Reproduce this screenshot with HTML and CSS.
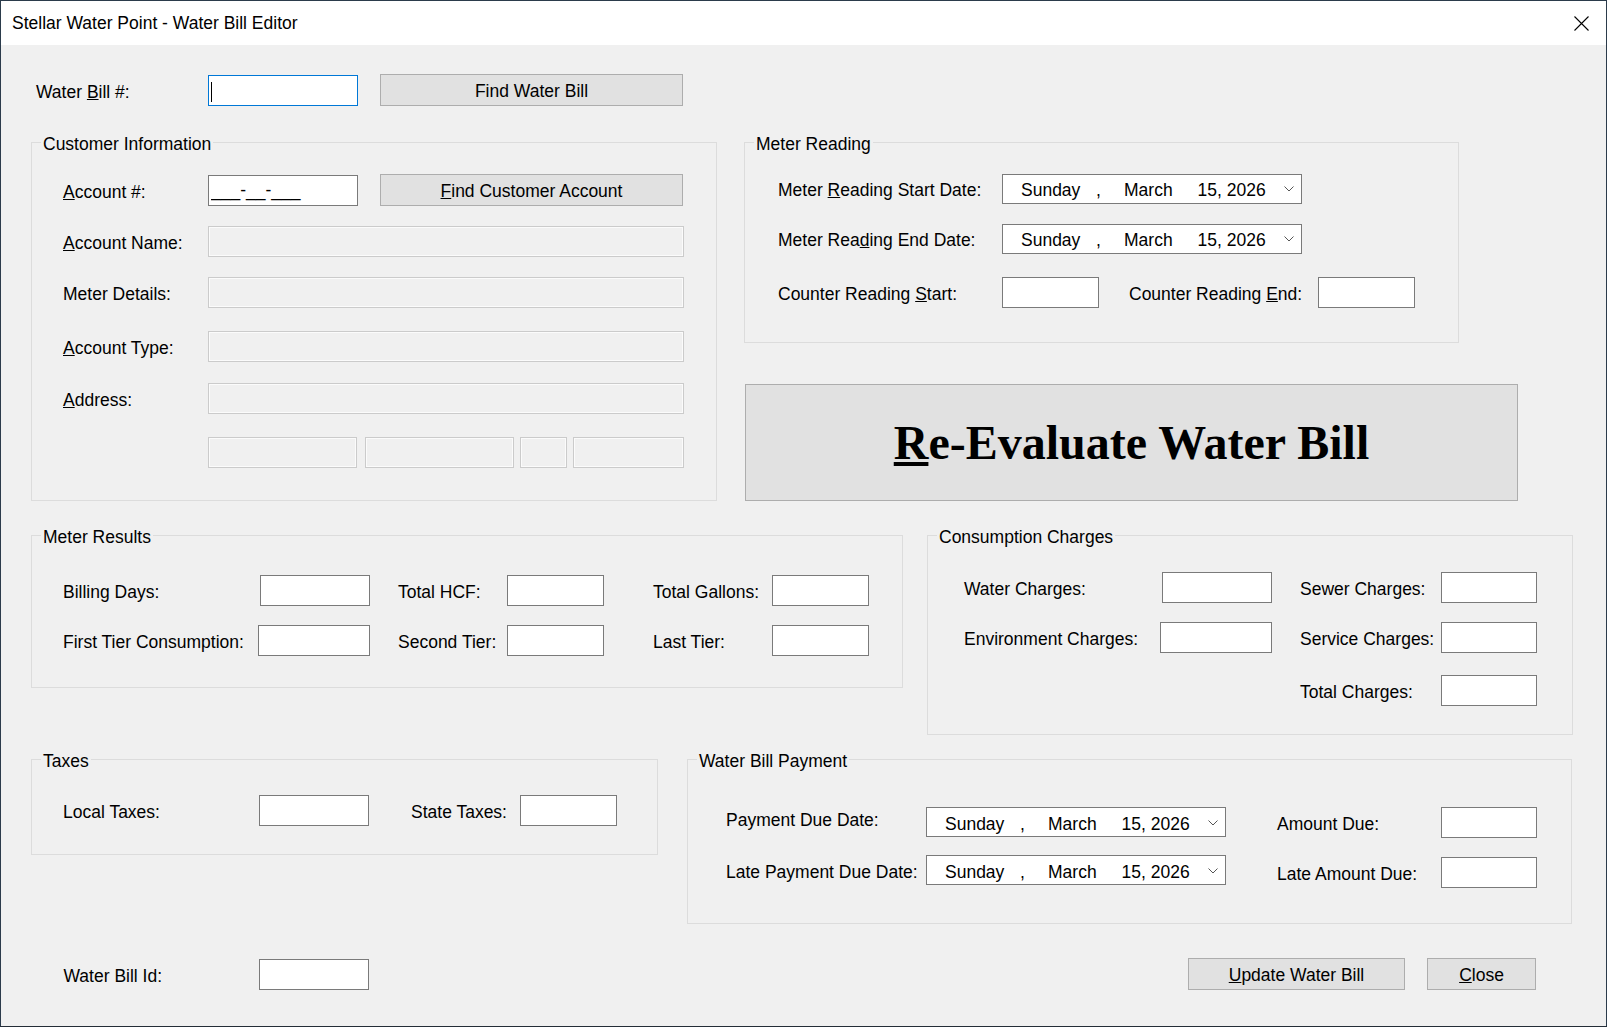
FILE: index.html
```html
<!DOCTYPE html>
<html>
<head>
    <meta charset="utf-8">
    <title>Stellar Water Point - Water Bill Editor</title>
    <link rel="stylesheet" href="styles.css">
</head>
<body>
<div class="window">
    <div class="titlebar">
        <span class="title">Stellar Water Point - Water Bill Editor</span>
        <svg class="close-x" width="15" height="15" viewBox="0 0 15 15">
            <path d="M0.5 0.5 L14.5 14.5 M14.5 0.5 L0.5 14.5" stroke="#000" stroke-width="1.1" fill="none"/>
        </svg>
    </div>

    <div class="content">
        <!-- bill lookup -->
        <div class="toprow">
            <label class="lbl w172">Water <u>B</u>ill #:</label>
            <span class="focus-wrap"><input class="tb w150 focused" type="text"><span class="caret"></span></span>
            <button class="btn w303 ml22">Find Water Bill</button>
        </div>

        <div class="band band2">
            <fieldset class="grp customer">
                <legend>Customer Information</legend>
                <div class="cust-body">
                    <div class="row">
                        <label class="lbl w145"><u>A</u>ccount #:</label>
                        <input class="tb w150 masked" type="text" value="___-__-___">
                        <button class="btn w303 ml22"><u>F</u>ind Customer Account</button>
                    </div>
                    <div class="row">
                        <label class="lbl w145"><u>A</u>ccount Name:</label>
                        <input class="tb ro w476" type="text" readonly>
                    </div>
                    <div class="row">
                        <label class="lbl w145">Meter Details:</label>
                        <input class="tb ro w476" type="text" readonly>
                    </div>
                    <div class="row">
                        <label class="lbl w145"><u>A</u>ccount Type:</label>
                        <input class="tb ro w476" type="text" readonly>
                    </div>
                    <div class="row">
                        <label class="lbl w145"><u>A</u>ddress:</label>
                        <input class="tb ro w476" type="text" readonly>
                    </div>
                    <div class="row">
                        <span class="lbl w145"></span>
                        <input class="tb ro w149" type="text" readonly>
                        <input class="tb ro w149 ml8" type="text" readonly>
                        <input class="tb ro w47 ml6" type="text" readonly>
                        <input class="tb ro w111 ml6" type="text" readonly>
                    </div>
                </div>
            </fieldset>

            <div class="right-col">
                <fieldset class="grp meter">
                    <legend>Meter Reading</legend>
                    <div class="meter-body">
                        <div class="row">
                            <label class="lbl w224">Meter <u>R</u>eading Start Date:</label>
                            <div class="datepick">
                                <span class="dp-day">Sunday</span><span class="dp-comma">,</span><span class="dp-month">March</span><span class="dp-year">15, 2026</span>
                                <svg class="chev" width="10" height="6" viewBox="0 0 10 6"><polyline points="0.5,0.5 5,5 9.5,0.5" fill="none" stroke="#555" stroke-width="1"/></svg>
                            </div>
                        </div>
                        <div class="row">
                            <label class="lbl w224">Meter Rea<u>d</u>ing End Date:</label>
                            <div class="datepick">
                                <span class="dp-day">Sunday</span><span class="dp-comma">,</span><span class="dp-month">March</span><span class="dp-year">15, 2026</span>
                                <svg class="chev" width="10" height="6" viewBox="0 0 10 6"><polyline points="0.5,0.5 5,5 9.5,0.5" fill="none" stroke="#555" stroke-width="1"/></svg>
                            </div>
                        </div>
                        <div class="row">
                            <label class="lbl w224">Counter Reading <u>S</u>tart:</label>
                            <input class="tb w97" type="text">
                            <label class="lbl w219 pl30">Counter Reading <u>E</u>nd:</label>
                            <input class="tb w97" type="text">
                        </div>
                    </div>
                </fieldset>

                <button class="btn btn-big"><u>R</u>e-Evaluate Water Bill</button>
            </div>
        </div>

        <div class="band band3">
            <fieldset class="grp results">
                <legend>Meter Results</legend>
                <div class="results-body">
                    <label class="lbl">Billing Days:</label>
                    <input class="tb" type="text">
                    <label class="lbl pl28">Total HCF:</label>
                    <input class="tb" type="text">
                    <label class="lbl pl49">Total Gallons:</label>
                    <input class="tb" type="text">

                    <label class="lbl">First Tier Consumption:</label>
                    <input class="tb nudge" type="text">
                    <label class="lbl pl28">Second Tier:</label>
                    <input class="tb" type="text">
                    <label class="lbl pl49">Last Tier:</label>
                    <input class="tb" type="text">
                </div>
            </fieldset>

            <fieldset class="grp charges">
                <legend>Consumption Charges</legend>
                <div class="charges-body">
                    <label class="lbl">Water Charges:</label>
                    <input class="tb" type="text">
                    <label class="lbl pl28">Sewer Charges:</label>
                    <input class="tb" type="text">

                    <label class="lbl">Environment Charges:</label>
                    <input class="tb nudge" type="text">
                    <label class="lbl pl28">Service Charges:</label>
                    <input class="tb" type="text">

                    <label class="lbl pl28 col3">Total Charges:</label>
                    <input class="tb" type="text">
                </div>
            </fieldset>
        </div>

        <div class="band band4">
            <fieldset class="grp taxes">
                <legend>Taxes</legend>
                <div class="taxes-body">
                    <label class="lbl">Local Taxes:</label>
                    <input class="tb" type="text">
                    <label class="lbl pl42">State Taxes:</label>
                    <input class="tb" type="text">
                </div>
            </fieldset>

            <fieldset class="grp payment">
                <legend>Water Bill Payment</legend>
                <div class="payment-body">
                    <label class="lbl up">Payment Due Date:</label>
                    <div class="datepick">
                        <span class="dp-day">Sunday</span><span class="dp-comma">,</span><span class="dp-month">March</span><span class="dp-year">15, 2026</span>
                        <svg class="chev" width="10" height="6" viewBox="0 0 10 6"><polyline points="0.5,0.5 5,5 9.5,0.5" fill="none" stroke="#555" stroke-width="1"/></svg>
                    </div>
                    <label class="lbl pl51">Amount Due:</label>
                    <input class="tb" type="text">

                    <label class="lbl">Late Payment Due Date:</label>
                    <div class="datepick">
                        <span class="dp-day">Sunday</span><span class="dp-comma">,</span><span class="dp-month">March</span><span class="dp-year">15, 2026</span>
                        <svg class="chev" width="10" height="6" viewBox="0 0 10 6"><polyline points="0.5,0.5 5,5 9.5,0.5" fill="none" stroke="#555" stroke-width="1"/></svg>
                    </div>
                    <label class="lbl pl51 low">Late Amount Due:</label>
                    <input class="tb low" type="text">
                </div>
            </fieldset>
        </div>

        <div class="foot">
            <label class="lbl w195">Water Bill Id:</label>
            <input class="tb w110" type="text">
            <button class="btn w217 push"><u>U</u>pdate Water Bill</button>
            <button class="btn w109 ml22"><u>C</u>lose</button>
        </div>
    </div>
</div>
</body>
</html>
```

FILE: styles.css
```css
* {
    box-sizing: border-box;
}

html,
body {
    margin: 0;
    padding: 0;
}

body {
    background: #242d37;
    font-family: "Liberation Sans", Arial, sans-serif;
    font-size: 17.5px;
    color: #000;
}

.window {
    width: 1607px;
    height: 1026px;
    border: 1px solid #2b3b4b;
    border-bottom: none;
    background: #f0f0f0;
    overflow: hidden;
}

.titlebar {
    height: 44px;
    background: #fff;
    display: flex;
    align-items: center;
    justify-content: space-between;
    padding: 0 17px 0 11px;
}

.title {
    font-size: 17.5px;
    line-height: 44px;
}

.close-x {
    display: block;
}

.content {
    padding-left: 30px;
}

/* generic controls */

.lbl {
    display: block;
    flex: none;
    white-space: nowrap;
    height: 31px;
    line-height: 27px;
    padding-top: 4px;
}

.lbl.up {
    padding-top: 0;
}

.tb {
    display: block;
    flex: none;
    height: 31px;
    margin: 0;
    padding: 1px 2px 0;
    border: 1px solid #7a7a7a;
    background: #fff;
    font: inherit;
    color: #000;
    outline: none;
    border-radius: 0;
}

.tb.ro {
    background: #f0f0f0;
    border-color: #cbcbcb;
    box-shadow: inset 0 0 0 1px #fbfbfb;
}

.tb.focused {
    border-color: #0078d7;
}

.tb.nudge {
    margin-left: -2px;
}

.btn {
    display: block;
    flex: none;
    height: 32px;
    margin: 0;
    padding: 3px 0 0;
    border: 1px solid #adadad;
    border-radius: 0;
    background: #e1e1e1;
    font: inherit;
    color: #000;
}

.focus-wrap {
    position: relative;
    display: block;
    flex: none;
}

.caret {
    position: absolute;
    left: 3px;
    top: 7px;
    width: 1px;
    height: 20px;
    background: #000;
}

.datepick {
    display: flex;
    align-items: center;
    flex: none;
    width: 300px;
    height: 30px;
    border: 1px solid #7a7a7a;
    background: #fff;
    padding: 4px 7px 0 18px;
    white-space: nowrap;
}

.dp-day {
    width: 75px;
}

.dp-comma {
    width: 28px;
}

.dp-month {
    width: 73.5px;
}

.chev {
    display: block;
    margin-left: auto;
    margin-top: -3px;
}

/* widths / offsets */

.w97 { width: 97px; }
.w109 { width: 109px; }
.w110 { width: 110px; }
.w111 { width: 111px; }
.w145 { width: 145px; }
.w149 { width: 149px; }
.w150 { width: 150px; }
.w47 { width: 47px; }
.w172 { width: 172px; }
.w195 { width: 195.5px; }
.w217 { width: 217px; }
.w219 { width: 219px; }
.w224 { width: 224px; }
.w303 { width: 303px; }
.w476 { width: 476px; }

.ml6 { margin-left: 6px; }
.ml8 { margin-left: 8px; }
.ml22 { margin-left: 22px; }

.pl28 { padding-left: 28px; }
.pl30 { padding-left: 30px; }
.pl42 { padding-left: 42px; }
.pl49 { padding-left: 49px; }
.pl51 { padding-left: 51px; }

.row {
    display: flex;
    align-items: center;
}

/* top row */

.toprow {
    display: flex;
    align-items: center;
    margin-top: 29px;
    padding-left: 5px;
}

/* bands of group boxes */

.band {
    display: flex;
    align-items: flex-start;
}

.band2 {
    margin-top: 25px;
}

.band3 {
    margin-top: 23px;
}

.band4 {
    margin-top: 13px;
}

.grp {
    flex: none;
    margin: 0;
    padding: 0;
    min-width: 0;
    border: 1px solid #dcdcdc;
}

.grp legend {
    margin-left: 9px;
    padding: 4px 2px 0;
    height: 22px;
    line-height: 18px;
}

/* customer information */

.customer {
    width: 686px;
}

.cust-body {
    display: grid;
    grid-template-rows: 52px 51px 54px 52px 54px 31px;
    align-items: start;
    padding: 21px 0 32px 31px;
}

/* meter reading + button */

.right-col {
    flex: none;
    margin-left: 27px;
}

.meter {
    width: 715px;
}

.meter-body {
    display: grid;
    grid-template-rows: 50px 54px 31px;
    align-items: start;
    padding: 20px 0 34px 33px;
}

.btn-big {
    width: 773px;
    height: 117px;
    margin: 41px 0 0 1px;
    padding: 0;
    font-family: "Liberation Serif", "Times New Roman", serif;
    font-weight: bold;
    font-size: 48px;
}

/* meter results */

.results {
    width: 872px;
}

.results-body {
    display: grid;
    grid-template-columns: 197px 110px 137px 97px 168px 97px;
    grid-template-rows: 50px 31px;
    align-items: start;
    padding: 29px 0 31px 31px;
}

/* consumption charges */

.charges {
    width: 646px;
    margin-left: 24px;
}

.charges-body {
    display: grid;
    grid-template-columns: 198px 110px 169px 96px;
    grid-template-rows: 50px 53px 30px;
    align-items: start;
    padding: 26px 0 29px 36px;
}

.charges-body .col3 {
    grid-column: 3;
}

/* taxes */

.taxes {
    width: 627px;
}

.taxes-body {
    display: grid;
    grid-template-columns: 196px 110px 151px 97px;
    align-items: start;
    padding: 25px 0 28px 31px;
}

/* payment */

.payment {
    width: 885px;
    margin-left: 29px;
}

.payment-body {
    display: grid;
    grid-template-columns: 200px 300px 215px 96px;
    grid-template-rows: 48px 33px;
    align-items: start;
    padding: 37px 0 34.5px 38px;
}

.payment-body .low {
    align-self: end;
}

/* footer */

.foot {
    display: flex;
    align-items: center;
    margin-top: 34.5px;
    padding: 0 70px 0 32.5px;
}

.push {
    margin-left: auto;
}
```
